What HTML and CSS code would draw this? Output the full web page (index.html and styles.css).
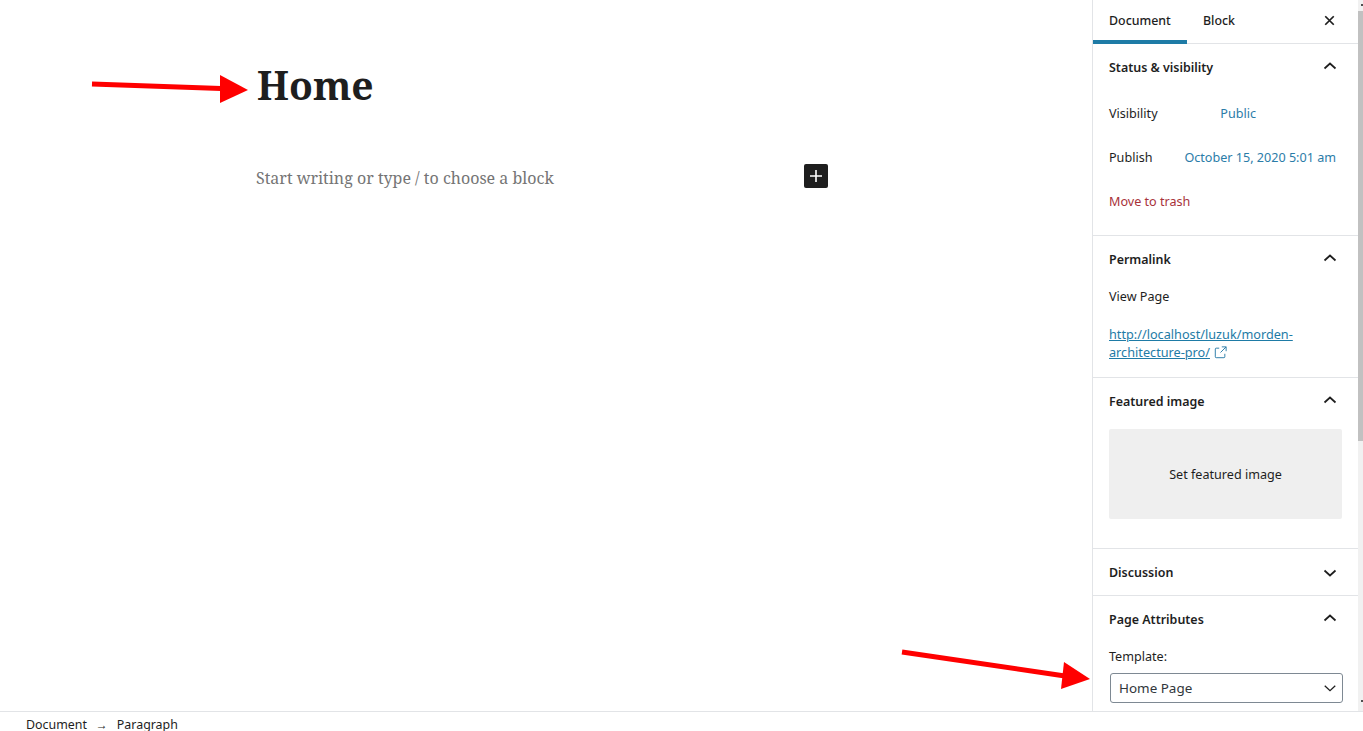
FILE: index.html
```html
<!DOCTYPE html>
<html>
<head>
  <title>Edit Page</title>
  <meta charset="UTF-8" />
  <link rel="stylesheet" href="styles.css">
</head>
<body>
  <div class="editor">
    <div class="content">
      <h1 class="post-title">Home</h1>
      <div class="block-row">
        <p class="placeholder">Start writing or type / to choose a block</p>
        <button class="add-block">
          <svg width="24" height="24" viewBox="0 0 24 24"><path d="M18 11.2h-5.2V6h-1.6v5.2H6v1.6h5.2V18h1.6v-5.2H18z" fill="#fff"/></svg>
        </button>
      </div>

      <!-- annotation arrows -->
      <svg class="arrow arrow-title" width="170" height="40" viewBox="0 0 170 40">
        <path d="M12 13l129 4.500" fill="none" stroke="#f00" stroke-width="5"/>
        <path d="M140 4l28 15-28 13z" fill="#f00"/>
      </svg>
      <svg class="arrow arrow-template" width="200" height="50" viewBox="0 0 200 50">
        <path d="M2 3l163 24" fill="none" stroke="#f00" stroke-width="5"/>
        <path d="M164 13l26 17-29 10z" fill="#f00"/>
      </svg>
    </div>

    <aside class="sidebar">
      <div class="tabs">
        <div class="tab active">Document</div>
        <div class="tab">Block</div>
        <button class="icon-btn close">
          <svg width="17" height="17" viewBox="0 0 24 24"><path d="M6 6l12 12M18 6L6 18" fill="none" stroke="#1e1e1e" stroke-width="2.400"/></svg>
        </button>
      </div>

      <section class="panel panel-status">
        <div class="panel-head">
          <span>Status &amp; visibility</span>
          <svg class="chev" width="24" height="24" viewBox="0 0 24 24"><path d="M6.500 14.500L12 9.500l5.500 5" /></svg>
        </div>
        <div class="row"><span>Visibility</span><a class="row-link link-public">Public</a></div>
        <div class="row"><span>Publish</span><a class="row-link">October 15, 2020 5:01 am</a></div>
        <div class="row"><a class="trash">Move to trash</a></div>
      </section>

      <section class="panel panel-permalink">
        <div class="panel-head">
          <span>Permalink</span>
          <svg class="chev" width="24" height="24" viewBox="0 0 24 24"><path d="M6.500 14.500L12 9.500l5.500 5" /></svg>
        </div>
        <div class="view-label">View Page</div>
        <div class="permalink">
          <a>http://localhost/luzuk/morden-architecture-pro/</a>
          <svg class="external" width="13" height="13" viewBox="0 0 15 15"><path d="M6 2.500H2.500a1 1 0 0 0-1 1v9a1 1 0 0 0 1 1h9a1 1 0 0 0 1-1V9M9 1h5v5M14 1L7.500 7.500" fill="none" stroke="#2b7ca8" stroke-width="1.100"/></svg>
        </div>
      </section>

      <section class="panel panel-featured">
        <div class="panel-head">
          <span>Featured image</span>
          <svg class="chev" width="24" height="24" viewBox="0 0 24 24"><path d="M6.500 14.500L12 9.500l5.500 5" /></svg>
        </div>
        <div class="featured-box">Set featured image</div>
      </section>

      <section class="panel panel-closed">
        <div class="panel-head">
          <span>Discussion</span>
          <svg class="chev" width="24" height="24" viewBox="0 0 24 24"><path d="M6.500 9.500L12 14.500l5.500-5" /></svg>
        </div>
      </section>

      <section class="panel panel-attrs">
        <div class="panel-head">
          <span>Page Attributes</span>
          <svg class="chev" width="24" height="24" viewBox="0 0 24 24"><path d="M6.500 14.500L12 9.500l5.500 5" /></svg>
        </div>
        <div class="template-label">Template:</div>
        <div class="select">
          <span>Home Page</span>
          <svg class="chev" width="18" height="18" viewBox="0 0 24 24"><path d="M5 9l7 6.500L19 9" /></svg>
        </div>
      </section>
    </aside>

    <div class="scrollbar"><div class="thumb"></div></div>
  </div>

  <footer class="breadcrumb">
    <span>Document</span>
    <span class="sep">→</span>
    <span>Paragraph</span>
  </footer>
</body>
</html>
```

FILE: styles.css
```css
* {
  box-sizing: border-box;
}

html, body {
  height: 100%;
}

body {
  margin: 0;
  overflow: hidden;
  background: #fff;
  color: #1e1e1e;
  font-family: "Noto Sans", sans-serif;
  font-size: 12.6px;
}

.editor {
  display: flex;
  height: 711px;
}

.content {
  position: relative;
  flex: 1;
  padding: 57px 0 0 257px;
}

.post-title {
  margin: 0;
  font-family: "Noto Serif", "DejaVu Serif", serif;
  font-size: 39px;
  line-height: 56px;
  font-weight: 700;
  color: #1e1e1e;
}

.block-row {
  display: flex;
  align-items: center;
  width: 572px;
  margin-top: 51px;
  margin-left: -1px;
}

.placeholder {
  flex: 1;
  margin: 0;
  font-family: "Noto Serif", "DejaVu Serif", serif;
  font-size: 16px;
  line-height: 28px;
  color: #757575;
}

.add-block {
  display: flex;
  align-items: center;
  justify-content: center;
  width: 24px;
  height: 24px;
  padding: 0;
  margin-top: -4px;
  border: none;
  border-radius: 2px;
  background: #1e1e1e;
}

.arrow {
  position: absolute;
}

.arrow-title {
  left: 80px;
  top: 71px;
}

.arrow-template {
  left: 900px;
  top: 649px;
}

.sidebar {
  width: 266px;
  height: 711px;
  overflow: hidden;
  border-left: 1px solid #e2e4e7;
}

.tabs {
  display: flex;
  align-items: stretch;
  height: 44px;
  border-bottom: 1px solid #e2e4e7;
}

.tab {
  padding: 13px 16px 0;
  line-height: 15px;
  font-size: 12.4px;
  font-weight: 500;
  color: #1e1e1e;
}

.tab.active {
  width: 94px;
  border-bottom: 4px solid #1e7ba6;
  height: 44px;
}

.icon-btn {
  display: flex;
  align-items: center;
  justify-content: center;
  margin-left: auto;
  width: 20px;
  height: 20px;
  margin-top: 10px;
  margin-right: 19px;
  padding: 0;
  border: none;
  background: none;
}

.panel {
  padding: 0 16px;
  border-bottom: 1px solid #e2e4e7;
}

.panel-head {
  display: flex;
  align-items: center;
  justify-content: space-between;
  height: 47px;
  padding-bottom: 1px;
  font-size: 12.45px;
  font-weight: 600;
}

.chev {
  flex: none;
}

.panel-head .chev {
  margin-top: -2px;
}

.panel-closed .panel-head .chev {
  margin-top: 2px;
}

.chev path {
  fill: none;
  stroke: #1e1e1e;
  stroke-width: 1.700;
}

.panel-status {
  height: 192px;
}

.row {
  display: flex;
  align-items: center;
  justify-content: space-between;
  height: 44px;
  padding-right: 6px;
}

.row-link {
  color: #2b7ca8;
}

.link-public {
  margin-right: 80px;
}

.trash {
  color: #a8323a;
}

.panel-permalink {
  height: 142px;
}

.view-label {
  margin-top: 5px;
  line-height: 18px;
}

.permalink {
  margin-top: 19px;
  line-height: 18px;
  width: 210px;
  font-size: 12.7px;
}

.permalink a {
  color: #1e7ba6;
  text-decoration: underline;
}

.external {
  margin-left: 1px;
  vertical-align: -2px;
}

.panel-featured {
  height: 171px;
}

.featured-box {
  display: flex;
  align-items: center;
  justify-content: center;
  width: 233px;
  height: 90px;
  margin-top: 4px;
  border-radius: 2px;
  background: #efefef;
}

.panel-closed {
  height: 47px;
}

.panel-attrs {
  border-bottom: none;
}

.template-label {
  margin-top: 5px;
  line-height: 18px;
}

.select {
  display: flex;
  align-items: center;
  justify-content: space-between;
  width: 233px;
  height: 30px;
  margin: 7px 0 0 1px;
  padding: 0 3px 0 8px;
  border: 1px solid #7e8993;
  border-radius: 3px;
  font-size: 13.45px;
  color: #32373c;
}

.scrollbar {
  position: relative;
  width: 5px;
  height: 711px;
  background: #f1f1f1;
}

/* tiny scroll arrows at the track's right edge */
.scrollbar::before,
.scrollbar::after {
  content: "";
  position: absolute;
  right: 0;
  width: 2px;
  height: 2px;
  background: #505050;
}

.scrollbar::before {
  top: 4px;
}

.scrollbar::after {
  top: 700px;
}

.thumb {
  height: 430px;
  margin-top: 11px;
  background: #c1c1c1;
}

.breadcrumb {
  display: flex;
  align-items: flex-start;
  gap: 9px;
  height: 20px;
  padding: 6px 0 0 26px;
  border-top: 1px solid #e2e4e7;
  font-size: 12.4px;
  line-height: 13px;
  color: #1e1e1e;
}

.sep {
  font-size: 12px;
  line-height: 13px;
}
```
